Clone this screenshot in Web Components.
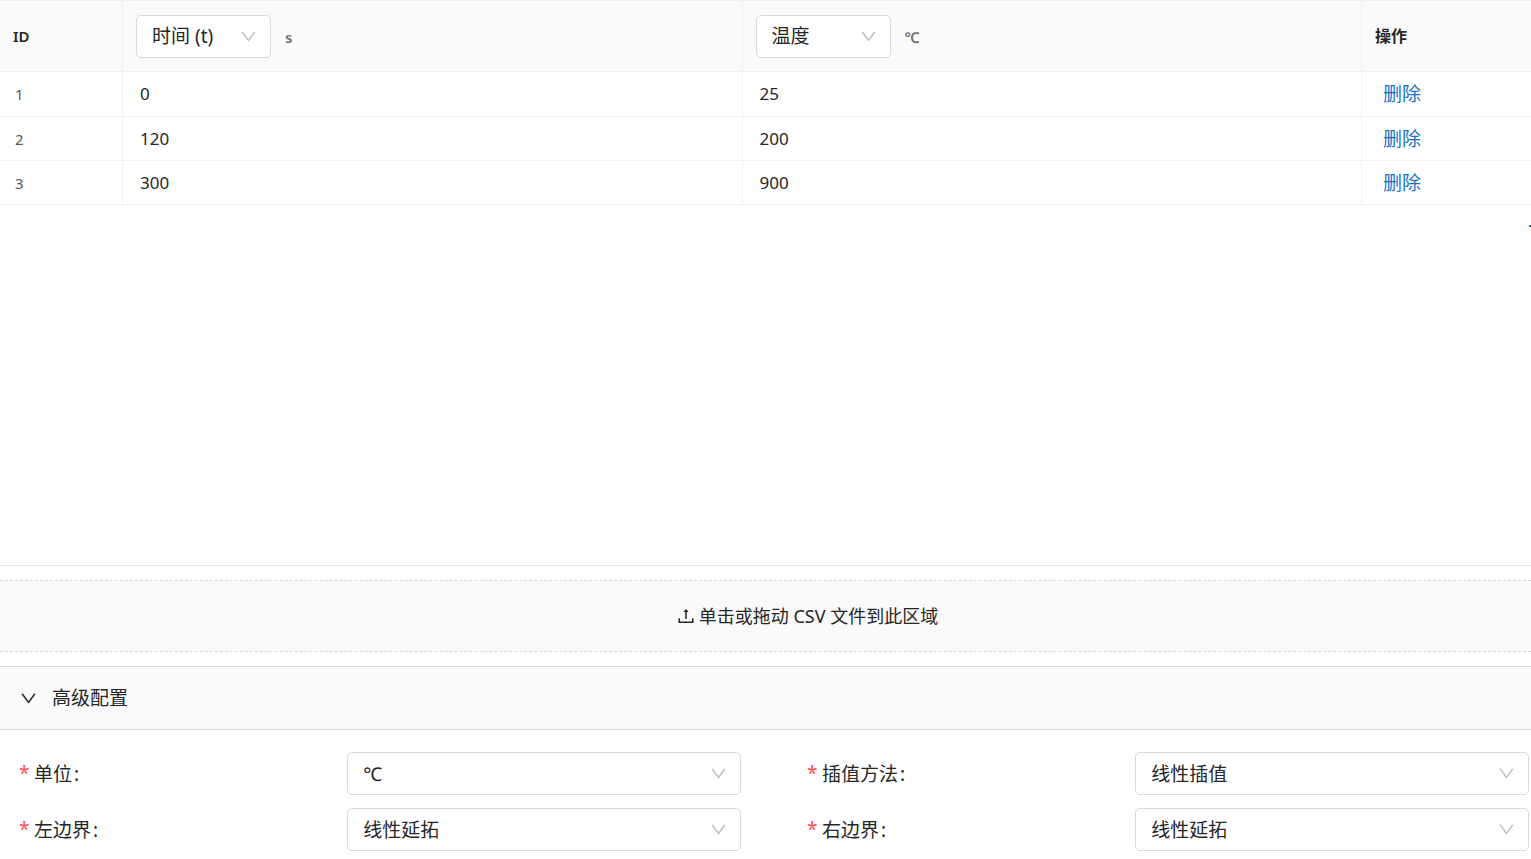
<!DOCTYPE html>
<html lang="zh-CN">
<head>
<meta charset="utf-8">
<meta name="viewport" content="width=device-width, initial-scale=1">
<title>曲线数据</title>
<style>
  body {
    margin: 0;
    background: #fff;
    color: #262626;
    font-family: "Noto Sans", "Noto Sans CJK SC", sans-serif;
    font-size: 19px;
    line-height: 28px;
  }
</style>
</head>
<body>
<curve-editor></curve-editor>

<script>
const CHEVRON = `<svg class="chevron" viewBox="64 64 896 896" aria-hidden="true"><path fill="currentColor" d="M884 256h-75c-5.1 0-9.9 2.5-12.9 6.6L512 654.2 227.9 262.6c-3-4.1-7.8-6.6-12.9-6.6h-75c-6.5 0-10.3 7.4-6.5 12.7l352.6 486.1c12.8 17.6 39 17.6 51.7 0l352.6-486.1c3.9-5.3.1-12.7-6.4-12.7z"/></svg>`;

const SELECT_CSS = `
  .box { position: relative; display: block; }
  select {
    appearance: none;
    display: block;
    box-sizing: border-box;
    width: 100%;
    height: 43px;
    margin: 0;
    padding: 0 40px 0 15px;
    border: 1px solid #d9d9d9;
    border-radius: 5px;
    background: #fff;
    color: inherit;
    font: inherit;
  }
  .chevron {
    position: absolute;
    top: 13px;
    right: 14px;
    width: 17px;
    height: 17px;
    color: #bfbfbf;
    pointer-events: none;
  }`;

function fillOptions(select, list) {
  for (const text of list.split(",")) select.add(new Option(text, text));
}

/* Column header: quantity picker followed by its unit */
class QuantityPicker extends HTMLElement {
  connectedCallback() {
    if (this.shadowRoot) return;
    const root = this.attachShadow({ mode: "open" });
    root.innerHTML = `
      <style>
        :host { display: flex; align-items: center; gap: 14px; }
        ${SELECT_CSS}
        .box { width: 135px; font-size: 19px; font-weight: 400; }
        .unit { padding-top: 2px; color: #737373; font-size: 15px; font-weight: 600; }
      </style>
      <span class="box"><select></select>${CHEVRON}</span>
      <span class="unit"><slot></slot></span>`;
    const select = root.querySelector("select");
    select.setAttribute("aria-label", this.getAttribute("label"));
    fillOptions(select, this.getAttribute("options"));
  }
}
customElements.define("quantity-picker", QuantityPicker);

/* Required form field: label on the left, drop-down on the right */
class FormField extends HTMLElement {
  connectedCallback() {
    if (this.shadowRoot) return;
    const root = this.attachShadow({ mode: "open" });
    root.innerHTML = `
      <style>
        :host { display: grid; grid-template-columns: 5fr 6fr; align-items: center; }
        ${SELECT_CSS}
        label { display: flex; align-items: center; }
        .star { width: 15px; color: #ff4d4f; font-size: 19px; line-height: 19px; }
        .colon { margin-left: 2px; }
      </style>
      <label for="field"><span class="star">*</span><span class="text"></span><span class="colon">:</span></label>
      <span class="box"><select id="field" required></select>${CHEVRON}</span>`;
    root.querySelector(".text").textContent = this.getAttribute("label");
    fillOptions(root.querySelector("select"), this.getAttribute("options"));
  }
}
customElements.define("form-field", FormField);

/* Editable list of sample points */
class DataTable extends HTMLElement {
  connectedCallback() {
    if (this.shadowRoot) return;
    const rows = [[0, 25], [120, 200], [300, 900]];
    const root = this.attachShadow({ mode: "open" });
    root.innerHTML = `
      <style>
        :host {
          display: block;
          box-sizing: border-box;
          min-height: 566px;
          border-top: 1px solid #f0f0f0;
          border-bottom: 1px solid #e8e8e8;
          overflow: hidden;
        }
        table { width: 100%; table-layout: fixed; border-collapse: separate; border-spacing: 0; }
        .id { width: 123px; }
        .action { width: 169px; }
        th, td {
          box-sizing: border-box;
          border-right: 1px solid #f0f0f0;
          border-bottom: 1px solid #f0f0f0;
          text-align: left;
        }
        th:last-child, td:last-child { border-right: 0; }
        th { height: 71px; padding: 0 13px; background: #fafafa; font-size: 16px; font-weight: 600; }
        th:first-child { font-size: 15px; }
        td { height: 44px; padding: 0 17px; font-size: 17px; line-height: 24px; }
        tr:first-child td { height: 45px; }
        td:first-child { padding: 0 15px; color: #595959; font-size: 15px; }
        td:last-child { padding: 0 21px; font-size: 19px; }
        a { color: #1a6fbf; text-decoration: none; }
        .tools { display: flex; justify-content: flex-end; padding-top: 12px; margin-right: -15px; }
        .tools button { display: flex; padding: 0; border: 0; background: none; color: #1a6fbf; }
        .tools svg { width: 18px; height: 18px; }
      </style>
      <table>
        <colgroup><col class="id"><col><col><col class="action"></colgroup>
        <thead><tr>
          <th>ID</th>
          <th><quantity-picker label="自变量" options="时间 (t)">s</quantity-picker></th>
          <th><quantity-picker label="因变量" options="温度">℃</quantity-picker></th>
          <th>操作</th>
        </tr></thead>
        <tbody>${rows.map(([x, y], i) => `
          <tr><td>${i + 1}</td><td>${x}</td><td>${y}</td><td><a href="#">删除</a></td></tr>`).join("")}
        </tbody>
      </table>
      <div class="tools"><button type="button" aria-label="添加">
        <svg viewBox="0 0 18 18" aria-hidden="true"><path d="M1 9h16M9 1v16" stroke="currentColor" stroke-width="2"/></svg>
      </button></div>`;
  }
}
customElements.define("data-table", DataTable);

/* Drop area for CSV files */
class UploadArea extends HTMLElement {
  connectedCallback() {
    if (this.shadowRoot) return;
    this.attachShadow({ mode: "open" }).innerHTML = `
      <style>
        :host { display: block; }
        button {
          display: flex;
          align-items: center;
          justify-content: center;
          gap: 4px;
          box-sizing: border-box;
          width: 100%;
          height: 72px;
          padding: 0 0 0 84px;
          border: dashed #d9d9d9;
          border-width: 1px 0;
          background: #fafafa;
          color: inherit;
          font: inherit;
          font-size: 18px;
        }
        svg { width: 18px; height: 18px; }
      </style>
      <button type="button">
        <svg viewBox="64 64 896 896" aria-hidden="true"><path fill="currentColor" d="M400 317.7h73.9V656c0 4.4 3.6 8 8 8h60c4.4 0 8-3.6 8-8V317.7H624c6.7 0 10.4-7.7 6.3-12.9L518.3 163a8 8 0 00-12.6 0l-112 141.7c-4.1 5.3-.4 13 6.3 13zM878 626h-60c-4.4 0-8 3.6-8 8v154H214V634c0-4.4-3.6-8-8-8h-60c-4.4 0-8 3.6-8 8v198c0 17.7 14.3 32 32 32h684c17.7 0 32-14.3 32-32V634c0-4.4-3.6-8-8-8z"/></svg>
        <span><slot></slot></span>
      </button>`;
  }
}
customElements.define("upload-area", UploadArea);

/* Collapsible section */
class CollapsePanel extends HTMLElement {
  connectedCallback() {
    if (this.shadowRoot) return;
    const root = this.attachShadow({ mode: "open" });
    root.innerHTML = `
      <style>
        :host { display: block; }
        button {
          display: flex;
          align-items: center;
          gap: 15px;
          box-sizing: border-box;
          width: 100%;
          height: 64px;
          padding: 0 20px;
          border: solid #d9d9d9;
          border-width: 1px 0;
          background: #fafafa;
          color: inherit;
          font: inherit;
          text-align: left;
        }
        .chevron { width: 17px; height: 17px; }
        .body { padding: 22px 2px 8px 19px; }
      </style>
      <button type="button" aria-expanded="true">${CHEVRON}<span class="title"></span></button>
      <div class="body"><slot></slot></div>`;
    root.querySelector(".title").textContent = this.getAttribute("heading");
    const button = root.querySelector("button");
    button.addEventListener("click", () => {
      const body = root.querySelector(".body");
      body.hidden = !body.hidden;
      button.setAttribute("aria-expanded", String(!body.hidden));
    });
  }
}
customElements.define("collapse-panel", CollapsePanel);

class CurveEditor extends HTMLElement {
  connectedCallback() {
    if (this.shadowRoot) return;
    this.attachShadow({ mode: "open" }).innerHTML = `
      <style>
        :host { display: flex; flex-direction: column; gap: 14px; }
        .form { display: grid; grid-template-columns: 1fr 1fr; gap: 13px 66px; }
      </style>
      <data-table></data-table>
      <upload-area>单击或拖动 CSV 文件到此区域</upload-area>
      <collapse-panel heading="高级配置">
        <div class="form">
          <form-field label="单位" options="℃"></form-field>
          <form-field label="插值方法" options="线性插值"></form-field>
          <form-field label="左边界" options="线性延拓"></form-field>
          <form-field label="右边界" options="线性延拓"></form-field>
        </div>
      </collapse-panel>`;
  }
}
customElements.define("curve-editor", CurveEditor);
</script>
</body>
</html>
